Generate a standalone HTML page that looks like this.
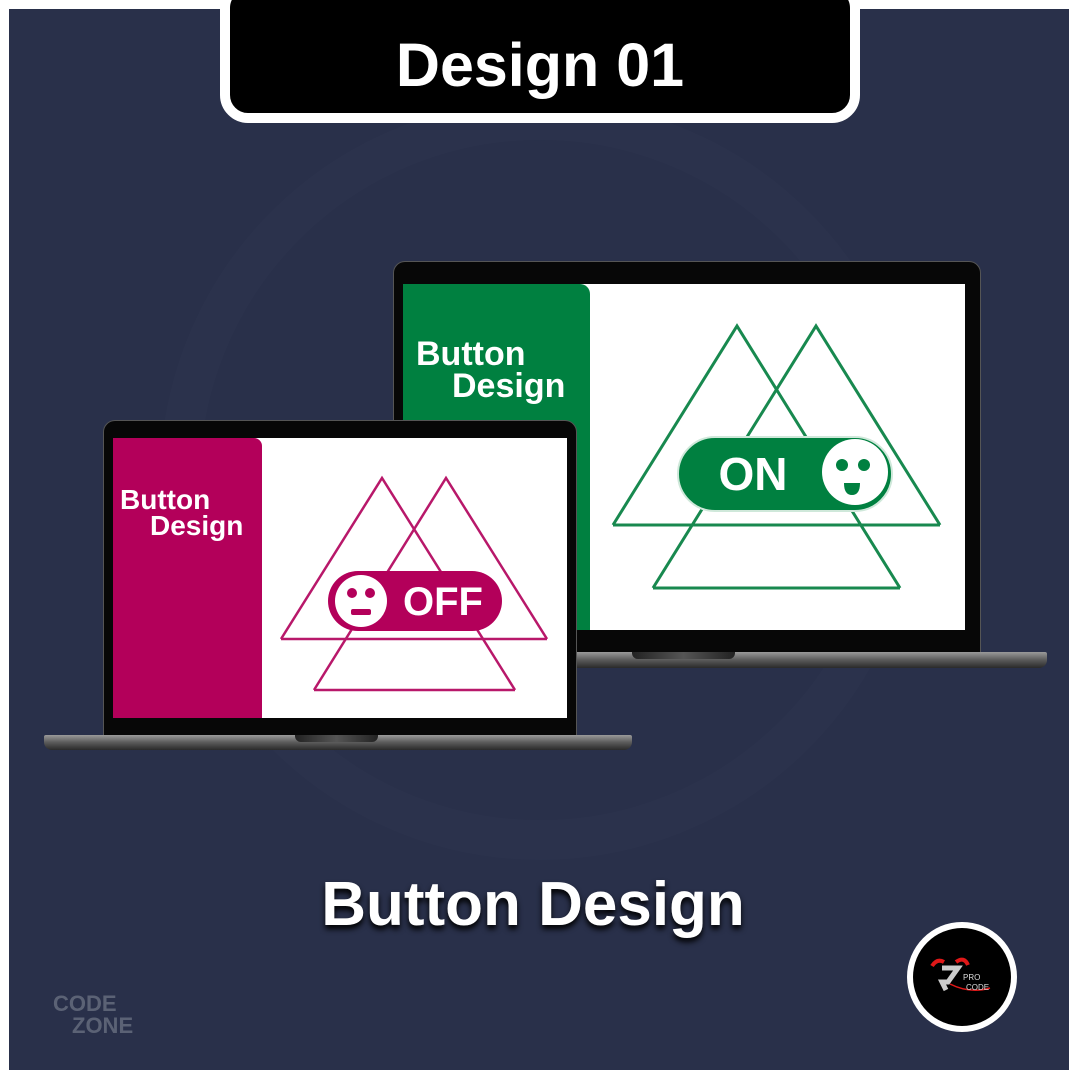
<!DOCTYPE html>
<html><head><meta charset="utf-8"><style>
*{margin:0;padding:0;box-sizing:border-box}
body{width:1080px;height:1080px;background:#fff;position:relative;overflow:hidden;font-family:"Liberation Sans",sans-serif}
.bg{position:absolute;left:9px;top:9px;width:1060px;height:1061px;background:#29304a}
.abs{position:absolute}
.tab{left:220px;top:-20px;width:640px;height:143px;background:#000;border:10px solid #fff;border-radius:28px;color:#fff;font-weight:bold;font-size:61px;text-align:center;line-height:150px}
.lid{background:#070707;border:1.5px solid #555;border-radius:12px 12px 0 0}
.base{background:linear-gradient(#9a9a9a,#5a5a5a 50%,#2a2a2a);border-radius:2px 2px 8px 8px}
.notch{background:linear-gradient(90deg,#222,#555,#222);border-radius:0 0 6px 6px}
.t{color:#fff;font-weight:bold;line-height:1}
</style></head><body>
<div class="bg"></div>
<svg class="abs" style="left:0;top:0" width="1080" height="1080"><circle cx="540" cy="480" r="360" fill="none" stroke="#2b324c" stroke-width="40"/></svg>
<div class="abs tab">Design 01</div>

<div class="abs lid" style="left:393px;top:261px;width:588px;height:393px"></div>
<div class="abs" style="left:403px;top:284px;width:562px;height:346px;background:#fff"></div>
<div class="abs" style="left:403px;top:284px;width:187px;height:346px;background:#008040;border-radius:0 10px 0 0"></div>
<div class="abs t" style="left:416px;top:337px;font-size:34px">Button</div>
<div class="abs t" style="left:452px;top:369px;font-size:34px">Design</div>
<div class="abs base" style="left:395px;top:652px;width:652px;height:16px"></div>
<div class="abs notch" style="left:632px;top:652px;width:103px;height:7px"></div>
<svg class="abs" style="left:0;top:0" width="1080" height="1080" fill="none">
<g stroke="#18894f" stroke-width="3">
<polyline points="613,525 737,326 900,588"/><polyline points="940,525 816,326 653,588"/>
<line x1="613" y1="525" x2="940" y2="525"/><line x1="653" y1="588" x2="900" y2="588"/></g>
<rect x="678" y="437" width="214" height="74" rx="37" fill="#008040" stroke="#cfe8da" stroke-width="2"/>
<circle cx="855" cy="472" r="33" fill="#fff"/>
<circle cx="842" cy="465" r="6" fill="#008040"/><circle cx="864" cy="465" r="6" fill="#008040"/>
<path d="M844 483h16q0 12-8 12t-8-12z" fill="#008040"/>
<text x="753" y="490" fill="#fff" font-size="46" font-weight="bold" font-family="Liberation Sans" text-anchor="middle">ON</text>
</svg>

<div class="abs lid" style="left:103px;top:420px;width:474px;height:317px"></div>
<div class="abs" style="left:113px;top:438px;width:454px;height:280px;background:#fff"></div>
<div class="abs" style="left:113px;top:438px;width:149px;height:280px;background:#b3005a;border-radius:0 8px 0 0"></div>
<div class="abs t" style="left:120px;top:486px;font-size:28px">Button</div>
<div class="abs t" style="left:150px;top:512px;font-size:28px">Design</div>
<div class="abs base" style="left:44px;top:735px;width:588px;height:15px"></div>
<div class="abs notch" style="left:295px;top:735px;width:83px;height:7px"></div>
<svg class="abs" style="left:0;top:0" width="1080" height="1080" fill="none">
<g stroke="#b8186a" stroke-width="2.5">
<polyline points="281,639 382,478 515,690"/><polyline points="547,639 446,478 314,690"/>
<line x1="281" y1="639" x2="547" y2="639"/><line x1="314" y1="690" x2="515" y2="690"/></g>
<rect x="328" y="571" width="174" height="60" rx="30" fill="#b3005a"/>
<circle cx="361" cy="601" r="26" fill="#fff"/>
<circle cx="352" cy="593" r="5" fill="#b3005a"/><circle cx="370" cy="593" r="5" fill="#b3005a"/>
<rect x="351" y="609" width="20" height="6" rx="2" fill="#b3005a"/>
<text x="443" y="615" fill="#fff" font-size="40" font-weight="bold" font-family="Liberation Sans" text-anchor="middle">OFF</text>
<circle cx="962" cy="977" r="55" fill="#fff"/><circle cx="962" cy="977" r="49" fill="#000"/>
<path d="M932 966q5-8 12-4M956 962q8-6 12 3" stroke="#e01818" stroke-width="4"/>
<path d="M942 968h16l-10 14h-6l4 8" stroke="#ccc" stroke-width="5"/>
<path d="M950 984q20 10 40 4" stroke="#e01818" stroke-width="1.5"/>
<text x="963" y="980" fill="#ddd" font-size="8" font-family="Liberation Sans">PRO</text>
<text x="966" y="990" fill="#ddd" font-size="8" font-family="Liberation Sans">CODE</text>
</svg>
<div class="abs t" style="left:0;width:1066px;text-align:center;top:874px;font-size:62px;text-shadow:0 4px 6px #000">Button Design</div>
<div class="abs" style="left:53px;top:993px;color:#5b6275;font-weight:bold;font-size:22px;line-height:22px">CODE<br><span style="margin-left:19px">ZONE</span></div>
</body></html>
